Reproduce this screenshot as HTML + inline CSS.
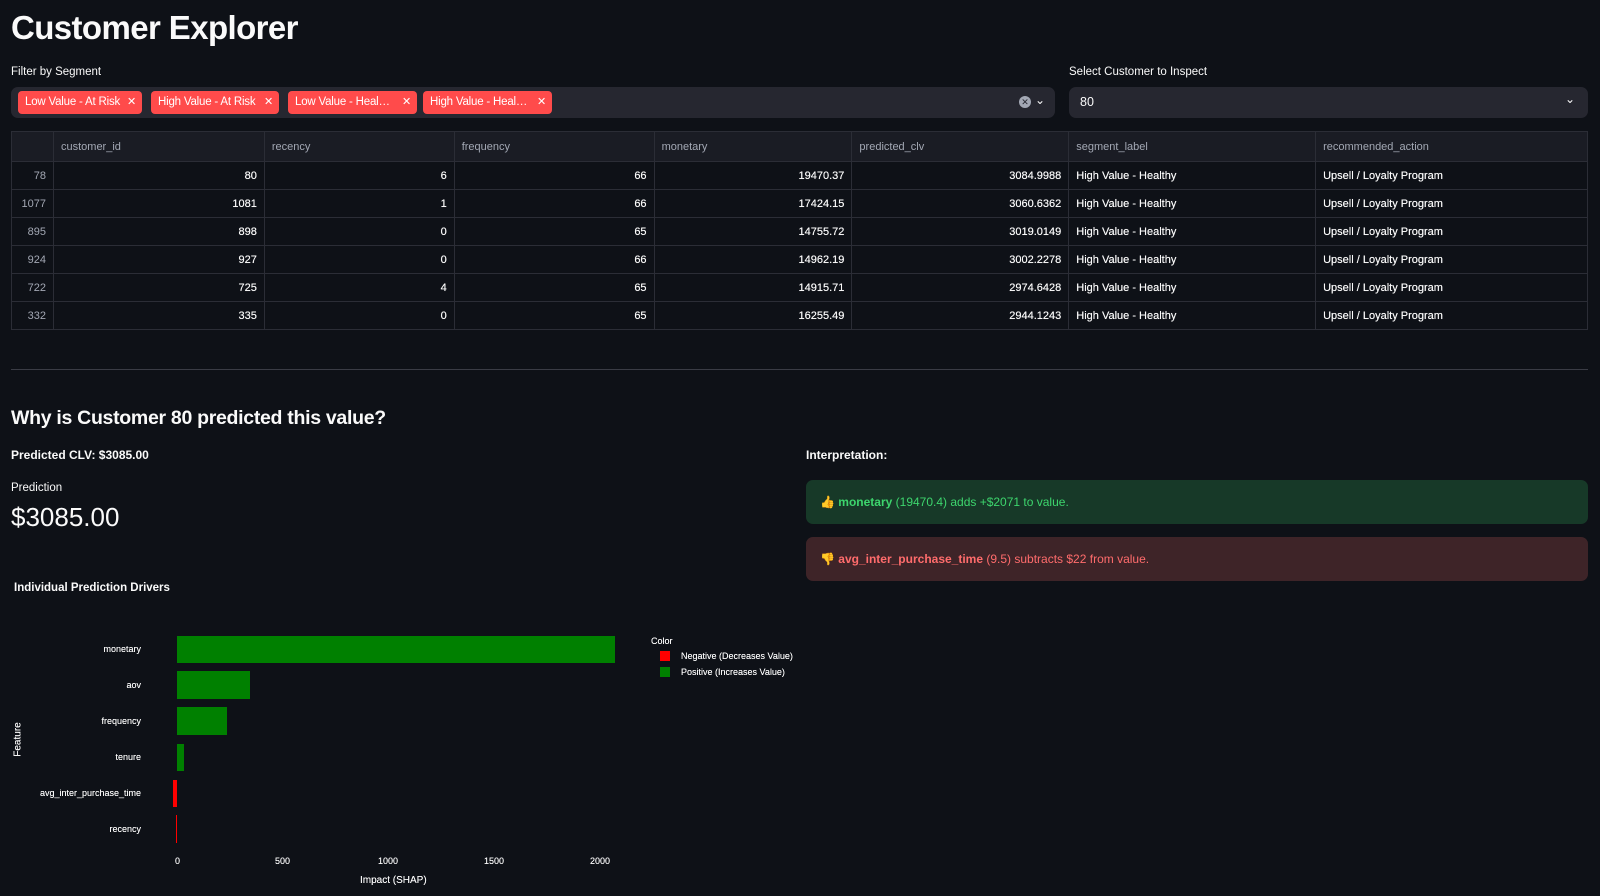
<!DOCTYPE html>
<html><head><meta charset="utf-8"><style>
*{box-sizing:border-box;margin:0;padding:0}
body{width:1600px;height:896px;background:#0e1117;color:#fafafa;font-family:"Liberation Sans",sans-serif;position:relative;overflow:hidden}
.a{position:absolute;white-space:nowrap}
h1{position:absolute;left:11px;top:9px;font-size:33px;font-weight:bold;letter-spacing:-0.6px}
.lbl{font-size:11.5px;color:#fafafa}
.box{position:absolute;background:#262730;border-radius:7px}
.tag{position:absolute;top:4px;height:23px;background:#ff4b4b;border-radius:4px;color:#fff;font-size:11.5px;line-height:23px;padding-left:7px;letter-spacing:-0.2px}
.tag span{position:absolute;right:6px;top:0;font-size:11px}
table{position:absolute;left:11px;top:131px;width:1577px;border-collapse:collapse;font-size:11px;border:1px solid #2b2d36}
td{border:1px solid #2b2d36;height:28px;padding:0 7px;color:#fafafa}
tr:not(.h) td:not(.i){text-shadow:0 0 0.4px #fafafa}
tr.h td{background:#1a1c24;color:#a3a8b4;height:30px}
td.r{text-align:right}
td.i{color:#a3a8b4;text-align:right}
.bar{position:absolute;background:#008000}
.t{font-size:9px;color:#fafafa;text-shadow:0 0 0.3px #fafafa}
</style></head><body>
<h1>Customer Explorer</h1>
<div class="a lbl" style="left:11px;top:66px">Filter by Segment</div>
<div class="box" style="left:11px;top:87px;width:1044px;height:31px">
<div class="tag" style="left:7px;width:124px">Low Value - At Risk<span>✕</span></div>
<div class="tag" style="left:140px;width:128px">High Value - At Risk<span>✕</span></div>
<div class="tag" style="left:277px;width:129px">Low Value - Heal…<span>✕</span></div>
<div class="tag" style="left:412px;width:129px">High Value - Heal…<span>✕</span></div>
<div class="a" style="left:1008px;top:9px;width:12px;height:12px;border-radius:50%;background:#a3a8b4;color:#262730;font-size:9px;line-height:12px;text-align:center">✕</div>
<div class="a" style="left:1024px;top:6px;font-size:12px;color:#fafafa">⌄</div>
</div>
<div class="a lbl" style="left:1069px;top:66px">Select Customer to Inspect</div>
<div class="box" style="left:1069px;top:87px;width:519px;height:31px">
<div class="a" style="left:11px;top:8px;font-size:12.5px">80</div>
<div class="a" style="left:496px;top:5px;font-size:12px">⌄</div>
</div>
<table>
<colgroup><col style="width:42px"><col style="width:211px"><col style="width:190px"><col style="width:200px"><col style="width:198px"><col style="width:217px"><col style="width:247px"><col style="width:272px"></colgroup>
<tr class="h"><td></td><td>customer_id</td><td>recency</td><td>frequency</td><td>monetary</td><td>predicted_clv</td><td>segment_label</td><td>recommended_action</td></tr>
<tr><td class="i">78</td><td class="r">80</td><td class="r">6</td><td class="r">66</td><td class="r">19470.37</td><td class="r">3084.9988</td><td>High Value - Healthy</td><td>Upsell / Loyalty Program</td></tr>
<tr><td class="i">1077</td><td class="r">1081</td><td class="r">1</td><td class="r">66</td><td class="r">17424.15</td><td class="r">3060.6362</td><td>High Value - Healthy</td><td>Upsell / Loyalty Program</td></tr>
<tr><td class="i">895</td><td class="r">898</td><td class="r">0</td><td class="r">65</td><td class="r">14755.72</td><td class="r">3019.0149</td><td>High Value - Healthy</td><td>Upsell / Loyalty Program</td></tr>
<tr><td class="i">924</td><td class="r">927</td><td class="r">0</td><td class="r">66</td><td class="r">14962.19</td><td class="r">3002.2278</td><td>High Value - Healthy</td><td>Upsell / Loyalty Program</td></tr>
<tr><td class="i">722</td><td class="r">725</td><td class="r">4</td><td class="r">65</td><td class="r">14915.71</td><td class="r">2974.6428</td><td>High Value - Healthy</td><td>Upsell / Loyalty Program</td></tr>
<tr><td class="i">332</td><td class="r">335</td><td class="r">0</td><td class="r">65</td><td class="r">16255.49</td><td class="r">2944.1243</td><td>High Value - Healthy</td><td>Upsell / Loyalty Program</td></tr>
</table>
<div class="a" style="left:11px;top:369px;width:1577px;height:1px;background:#3a3c45"></div>
<div class="a" style="left:11px;top:407px;font-size:19.5px;font-weight:bold;letter-spacing:-0.3px">Why is Customer 80 predicted this value?</div>
<div class="a" style="left:11px;top:448px;font-size:12px;font-weight:bold">Predicted CLV: $3085.00</div>
<div class="a" style="left:11px;top:482px;font-size:11.5px">Prediction</div>
<div class="a" style="left:11px;top:502px;font-size:26px">$3085.00</div>
<div class="a" style="left:14px;top:582px;font-size:11.5px;font-weight:bold">Individual Prediction Drivers</div>
<div class="a" style="left:806px;top:448px;font-size:12px;font-weight:bold">Interpretation:</div>
<div class="a" style="left:806px;top:480px;width:782px;height:44px;background:#173928;border-radius:7px;color:#3dd56d;font-size:12px;line-height:44px;padding-left:14px">👍 <b>monetary</b> (19470.4) adds +$2071 to value.</div>
<div class="a" style="left:806px;top:537px;width:782px;height:44px;background:#3e2428;border-radius:7px;color:#ff6c6c;font-size:12px;line-height:44px;padding-left:14px">👎 <b>avg_inter_purchase_time</b> (9.5) subtracts $22 from value.</div>
<div class="bar" style="left:177px;top:636px;width:438px;height:27px"></div>
<div class="bar" style="left:177px;top:671px;width:73px;height:28px"></div>
<div class="bar" style="left:177px;top:707px;width:50px;height:28px"></div>
<div class="bar" style="left:177px;top:744px;width:7px;height:27px"></div>
<div class="bar" style="left:173px;top:780px;width:4px;height:27px;background:#ff0000"></div>
<div class="bar" style="left:176px;top:815px;width:1px;height:28px;background:#ff0000"></div>
<div class="a t" style="right:1459px;top:644px">monetary</div>
<div class="a t" style="right:1459px;top:680px">aov</div>
<div class="a t" style="right:1459px;top:716px">frequency</div>
<div class="a t" style="right:1459px;top:752px">tenure</div>
<div class="a t" style="right:1459px;top:788px">avg_inter_purchase_time</div>
<div class="a t" style="right:1459px;top:824px">recency</div>
<div class="a t" style="left:175px;top:856px">0</div>
<div class="a t" style="left:275px;top:856px">500</div>
<div class="a t" style="left:378px;top:856px">1000</div>
<div class="a t" style="left:484px;top:856px">1500</div>
<div class="a t" style="left:590px;top:856px">2000</div>
<div class="a" style="left:360px;top:875px;font-size:10px;text-shadow:0 0 0.3px #fafafa">Impact (SHAP)</div>
<div class="a" style="left:1px;top:734px;font-size:10px;transform:rotate(-90deg);text-shadow:0 0 0.3px #fafafa">Feature</div>
<div class="a t" style="left:651px;top:636px">Color</div>
<div class="a" style="left:660px;top:651px;width:10px;height:10px;background:#ff0000"></div>
<div class="a t" style="left:681px;top:651px">Negative (Decreases Value)</div>
<div class="a" style="left:660px;top:667px;width:10px;height:10px;background:#008000"></div>
<div class="a t" style="left:681px;top:667px">Positive (Increases Value)</div>
</body></html>
